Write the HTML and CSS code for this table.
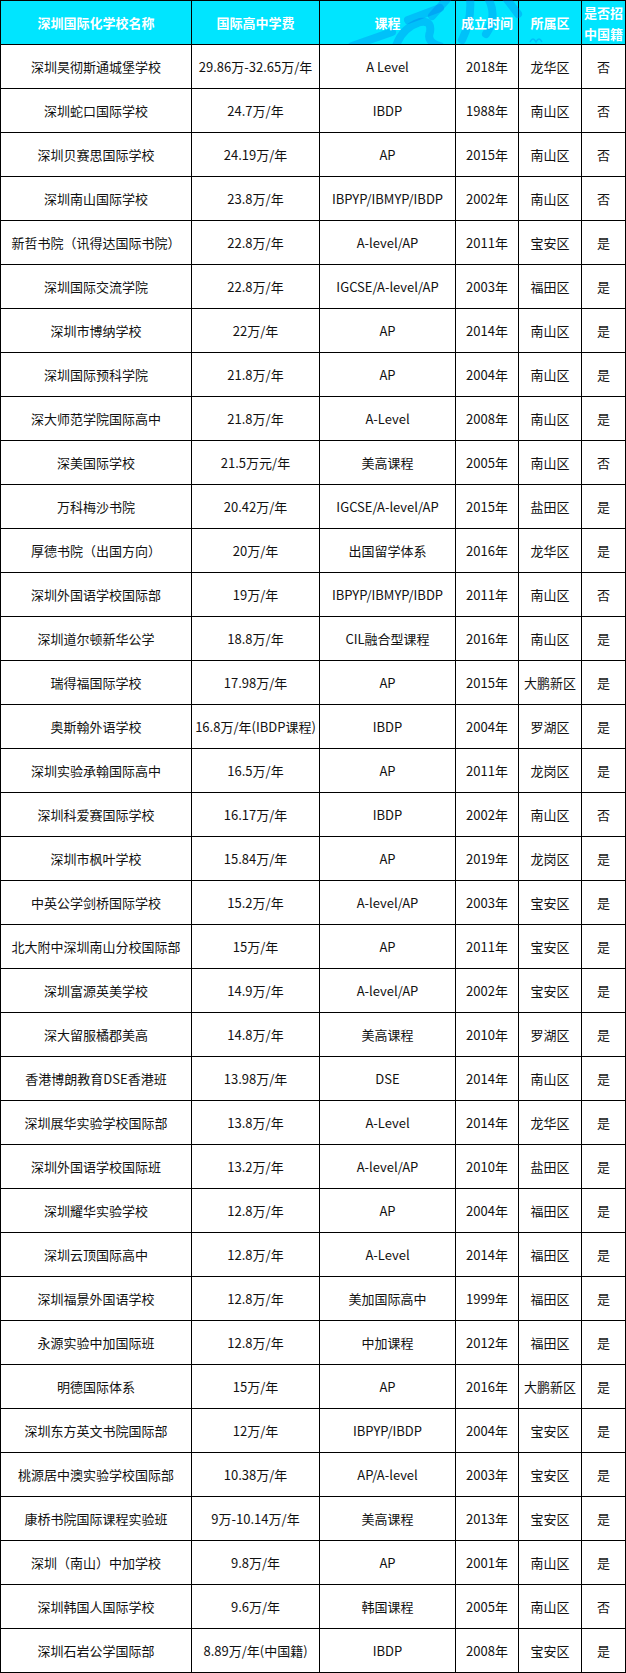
FILE: index.html
```html
<!DOCTYPE html>
<html lang="zh-CN">
<head>
<meta charset="utf-8">
<title>深圳国际化学校学费</title>
<link rel="stylesheet" href="styles.css">
</head>
<body>
<div class="table">
  <svg class="watermark" width="626" height="44" viewBox="0 0 626 44" aria-hidden="true">
    <g fill="none" stroke="rgba(0,110,235,0.3)" stroke-width="8" stroke-linecap="round">
      <path d="M352 46 L392 32"/>
      <path d="M396 46 Q402 28 420 22 Q432 20 430 32 Q426 42 440 46"/>
      <path d="M408 20 L440 8"/>
      <path d="M448 -2 L432 16"/>
      <path d="M470 -2 Q472 20 462 40"/>
      <path d="M488 -2 Q498 16 486 34"/>
      <path d="M506 -2 L518 14"/>
    </g>
    <path d="M530 42 q3 -6 6 0 q3 -6 6 0" fill="none" stroke="rgba(0,110,235,0.3)" stroke-width="1.5"/>
  </svg>
  <div class="cell head"><span>深圳国际化学校名称</span></div>
  <div class="cell head"><span>国际高中学费</span></div>
  <div class="cell head"><span>课程</span></div>
  <div class="cell head"><span>成立时间</span></div>
  <div class="cell head"><span>所属区</span></div>
  <div class="cell head two"><span>是否招<br>中国籍</span></div>

  <div class="cell">深圳昊彻斯通城堡学校</div><div class="cell">29.86万-32.65万/年</div><div class="cell">A Level</div><div class="cell">2018年</div><div class="cell">龙华区</div><div class="cell">否</div>
  <div class="cell">深圳蛇口国际学校</div><div class="cell">24.7万/年</div><div class="cell">IBDP</div><div class="cell">1988年</div><div class="cell">南山区</div><div class="cell">否</div>
  <div class="cell">深圳贝赛思国际学校</div><div class="cell">24.19万/年</div><div class="cell">AP</div><div class="cell">2015年</div><div class="cell">南山区</div><div class="cell">否</div>
  <div class="cell">深圳南山国际学校</div><div class="cell">23.8万/年</div><div class="cell">IBPYP/IBMYP/IBDP</div><div class="cell">2002年</div><div class="cell">南山区</div><div class="cell">否</div>
  <div class="cell">新哲书院（讯得达国际书院）</div><div class="cell">22.8万/年</div><div class="cell">A-level/AP</div><div class="cell">2011年</div><div class="cell">宝安区</div><div class="cell">是</div>
  <div class="cell">深圳国际交流学院</div><div class="cell">22.8万/年</div><div class="cell">IGCSE/A-level/AP</div><div class="cell">2003年</div><div class="cell">福田区</div><div class="cell">是</div>
  <div class="cell">深圳市博纳学校</div><div class="cell">22万/年</div><div class="cell">AP</div><div class="cell">2014年</div><div class="cell">南山区</div><div class="cell">是</div>
  <div class="cell">深圳国际预科学院</div><div class="cell">21.8万/年</div><div class="cell">AP</div><div class="cell">2004年</div><div class="cell">南山区</div><div class="cell">是</div>
  <div class="cell">深大师范学院国际高中</div><div class="cell">21.8万/年</div><div class="cell">A-Level</div><div class="cell">2008年</div><div class="cell">南山区</div><div class="cell">是</div>
  <div class="cell">深美国际学校</div><div class="cell">21.5万元/年</div><div class="cell">美高课程</div><div class="cell">2005年</div><div class="cell">南山区</div><div class="cell">否</div>
  <div class="cell">万科梅沙书院</div><div class="cell">20.42万/年</div><div class="cell">IGCSE/A-level/AP</div><div class="cell">2015年</div><div class="cell">盐田区</div><div class="cell">是</div>
  <div class="cell">厚德书院（出国方向）</div><div class="cell">20万/年</div><div class="cell">出国留学体系</div><div class="cell">2016年</div><div class="cell">龙华区</div><div class="cell">是</div>
  <div class="cell">深圳外国语学校国际部</div><div class="cell">19万/年</div><div class="cell">IBPYP/IBMYP/IBDP</div><div class="cell">2011年</div><div class="cell">南山区</div><div class="cell">否</div>
  <div class="cell">深圳道尔顿新华公学</div><div class="cell">18.8万/年</div><div class="cell">CIL融合型课程</div><div class="cell">2016年</div><div class="cell">南山区</div><div class="cell">是</div>
  <div class="cell">瑞得福国际学校</div><div class="cell">17.98万/年</div><div class="cell">AP</div><div class="cell">2015年</div><div class="cell">大鹏新区</div><div class="cell">是</div>
  <div class="cell">奥斯翰外语学校</div><div class="cell">16.8万/年(IBDP课程)</div><div class="cell">IBDP</div><div class="cell">2004年</div><div class="cell">罗湖区</div><div class="cell">是</div>
  <div class="cell">深圳实验承翰国际高中</div><div class="cell">16.5万/年</div><div class="cell">AP</div><div class="cell">2011年</div><div class="cell">龙岗区</div><div class="cell">是</div>
  <div class="cell">深圳科爱赛国际学校</div><div class="cell">16.17万/年</div><div class="cell">IBDP</div><div class="cell">2002年</div><div class="cell">南山区</div><div class="cell">否</div>
  <div class="cell">深圳市枫叶学校</div><div class="cell">15.84万/年</div><div class="cell">AP</div><div class="cell">2019年</div><div class="cell">龙岗区</div><div class="cell">是</div>
  <div class="cell">中英公学剑桥国际学校</div><div class="cell">15.2万/年</div><div class="cell">A-level/AP</div><div class="cell">2003年</div><div class="cell">宝安区</div><div class="cell">是</div>
  <div class="cell">北大附中深圳南山分校国际部</div><div class="cell">15万/年</div><div class="cell">AP</div><div class="cell">2011年</div><div class="cell">宝安区</div><div class="cell">是</div>
  <div class="cell">深圳富源英美学校</div><div class="cell">14.9万/年</div><div class="cell">A-level/AP</div><div class="cell">2002年</div><div class="cell">宝安区</div><div class="cell">是</div>
  <div class="cell">深大留服橘郡美高</div><div class="cell">14.8万/年</div><div class="cell">美高课程</div><div class="cell">2010年</div><div class="cell">罗湖区</div><div class="cell">是</div>
  <div class="cell">香港博朗教育DSE香港班</div><div class="cell">13.98万/年</div><div class="cell">DSE</div><div class="cell">2014年</div><div class="cell">南山区</div><div class="cell">是</div>
  <div class="cell">深圳展华实验学校国际部</div><div class="cell">13.8万/年</div><div class="cell">A-Level</div><div class="cell">2014年</div><div class="cell">龙华区</div><div class="cell">是</div>
  <div class="cell">深圳外国语学校国际班</div><div class="cell">13.2万/年</div><div class="cell">A-level/AP</div><div class="cell">2010年</div><div class="cell">盐田区</div><div class="cell">是</div>
  <div class="cell">深圳耀华实验学校</div><div class="cell">12.8万/年</div><div class="cell">AP</div><div class="cell">2004年</div><div class="cell">福田区</div><div class="cell">是</div>
  <div class="cell">深圳云顶国际高中</div><div class="cell">12.8万/年</div><div class="cell">A-Level</div><div class="cell">2014年</div><div class="cell">福田区</div><div class="cell">是</div>
  <div class="cell">深圳福景外国语学校</div><div class="cell">12.8万/年</div><div class="cell">美加国际高中</div><div class="cell">1999年</div><div class="cell">福田区</div><div class="cell">是</div>
  <div class="cell">永源实验中加国际班</div><div class="cell">12.8万/年</div><div class="cell">中加课程</div><div class="cell">2012年</div><div class="cell">福田区</div><div class="cell">是</div>
  <div class="cell">明德国际体系</div><div class="cell">15万/年</div><div class="cell">AP</div><div class="cell">2016年</div><div class="cell">大鹏新区</div><div class="cell">是</div>
  <div class="cell">深圳东方英文书院国际部</div><div class="cell">12万/年</div><div class="cell">IBPYP/IBDP</div><div class="cell">2004年</div><div class="cell">宝安区</div><div class="cell">是</div>
  <div class="cell">桃源居中澳实验学校国际部</div><div class="cell">10.38万/年</div><div class="cell">AP/A-level</div><div class="cell">2003年</div><div class="cell">宝安区</div><div class="cell">是</div>
  <div class="cell">康桥书院国际课程实验班</div><div class="cell">9万-10.14万/年</div><div class="cell">美高课程</div><div class="cell">2013年</div><div class="cell">宝安区</div><div class="cell">是</div>
  <div class="cell">深圳（南山）中加学校</div><div class="cell">9.8万/年</div><div class="cell">AP</div><div class="cell">2001年</div><div class="cell">南山区</div><div class="cell">是</div>
  <div class="cell">深圳韩国人国际学校</div><div class="cell">9.6万/年</div><div class="cell">韩国课程</div><div class="cell">2005年</div><div class="cell">南山区</div><div class="cell">否</div>
  <div class="cell">深圳石岩公学国际部</div><div class="cell">8.89万/年(中国籍)</div><div class="cell">IBDP</div><div class="cell">2008年</div><div class="cell">宝安区</div><div class="cell">是</div>
</div>
</body>
</html>
```

FILE: styles.css
```css
html, body {
  margin: 0;
  padding: 0;
  background: #fff;
}

body {
  font-family: "Noto Sans CJK SC", "Microsoft YaHei", "Liberation Sans", sans-serif;
}

.table {
  position: relative;
  isolation: isolate;
  box-sizing: border-box;
  width: 626px;
  display: grid;
  grid-template-columns: 190px 127px 135px 62px 62px 43px;
  grid-auto-rows: 43px;
  gap: 1px;
  padding: 1px;
  background: #000;
}

.cell {
  background: #fff;
  display: flex;
  align-items: center;
  justify-content: center;
  text-align: center;
  font-size: 13px;
  line-height: 16px;
  color: #111;
  white-space: nowrap;
}

.head {
  background: #00e5ff;
  color: #fff;
  font-weight: bold;
}

.head span {
  position: relative;
  z-index: 2;
}

.head.two {
  line-height: 21px;
}

.watermark {
  position: absolute;
  left: 0;
  top: 0;
  width: 626px;
  height: 44px;
  z-index: 1;
  pointer-events: none;
}
```
